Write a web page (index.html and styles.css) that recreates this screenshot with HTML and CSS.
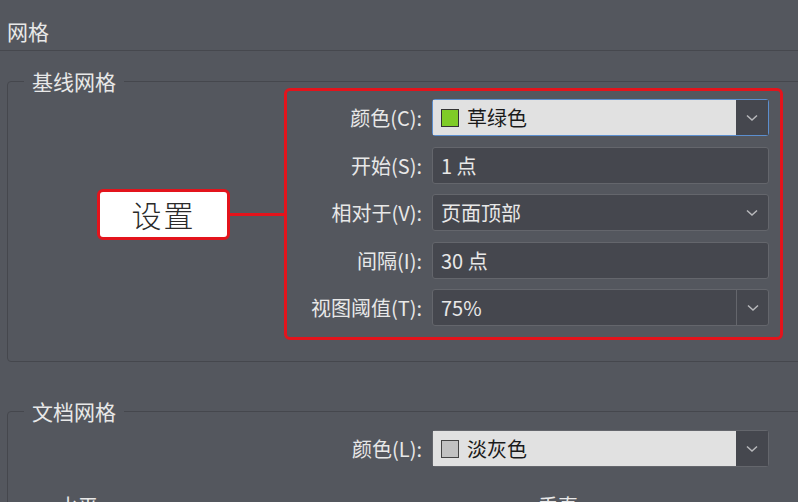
FILE: index.html
```html
<!DOCTYPE html>
<html lang="zh">
  <head>
    <meta charset="UTF-8" />
    <title>网格</title>
    <link rel="stylesheet" href="styles.css">
  </head>
  <body>
    <div class="page-title">网格</div>

    <fieldset class="group">
      <legend>基线网格</legend>
      <div class="callout-row">
        <div class="callout">设置</div>
        <div class="connector"></div>
        <div class="highlight">
          <div class="row">
            <label>颜色(C):</label>
            <div class="select light focus">
              <span class="value"><span class="swatch green"></span>草绿色</span>
              <span class="drop"><svg width="12" height="8" viewBox="0 0 12 8"><path d="M1 1.5 L6 6 L11 1.5" /></svg></span>
            </div>
          </div>
          <div class="row">
            <label>开始(S):</label>
            <div class="field">1 点</div>
          </div>
          <div class="row">
            <label>相对于(V):</label>
            <div class="select flat">
              <span class="value">页面顶部</span>
              <span class="drop"><svg width="12" height="8" viewBox="0 0 12 8"><path d="M1 1.5 L6 6 L11 1.5" /></svg></span>
            </div>
          </div>
          <div class="row">
            <label>间隔(I):</label>
            <div class="field">30 点</div>
          </div>
          <div class="row">
            <label>视图阈值(T):</label>
            <div class="select dark">
              <span class="value">75%</span>
              <span class="drop"><svg width="12" height="8" viewBox="0 0 12 8"><path d="M1 1.5 L6 6 L11 1.5" /></svg></span>
            </div>
          </div>
        </div>
      </div>
    </fieldset>

    <fieldset class="group second">
      <legend>文档网格</legend>
      <div class="row doc-row">
        <label>颜色(L):</label>
        <div class="select light">
          <span class="value"><span class="swatch grey"></span>淡灰色</span>
          <span class="drop"><svg width="12" height="8" viewBox="0 0 12 8"><path d="M1 1.5 L6 6 L11 1.5" /></svg></span>
        </div>
      </div>
      <div class="sub-heads">
        <span class="h-left">水平</span>
        <span class="h-right">垂直</span>
      </div>
    </fieldset>
  </body>
</html>
```

FILE: styles.css
```css
body {
  margin: 0;
  height: 502px;
  background: #54575e;
  color: #e8e8e8;
  font-family: "Noto Sans CJK SC", "Noto Sans", sans-serif;
  font-size: 20px;
  overflow: hidden;
}
.page-title {
  height: 51px;
  box-sizing: border-box;
  padding-left: 7px;
  line-height: 62px;
  font-size: 21px;
  border-bottom: 1px solid #46484e;
}
.group {
  margin: 20px -30px 0 7px;
  padding: 0 0 21px 0;
  border: 1px solid #45474d;
  border-radius: 4px;
  min-width: 0;
}
.group legend {
  margin-left: 16px;
  padding: 0 8px;
  line-height: 20px;
  font-size: 21px;
}
.callout-row {
  display: flex;
  align-items: center;
  margin-top: -3px;
}
.callout {
  margin-left: 89px;
  width: 127px;
  height: 45px;
  background: #fff;
  border: 3px solid #e3141c;
  border-radius: 6px;
  color: #2a2a2a;
  font-size: 30px;
  font-weight: 300;
  display: flex;
  align-items: center;
  justify-content: center;
  letter-spacing: 2px;
}
.connector {
  width: 54px;
  height: 3px;
  background: #e3141c;
}
.highlight {
  width: 499px;
  box-sizing: border-box;
  border: 3px solid #e3141c;
  border-radius: 6px;
  padding: 8px 11px 11px 0;
  display: flex;
  flex-direction: column;
  gap: 10.5px;
}
.row {
  display: flex;
  align-items: center;
  height: 37px;
}
.row label {
  width: 145px;
  box-sizing: border-box;
  padding-right: 10px;
  text-align: right;
  flex-shrink: 0;
  white-space: nowrap;
}
.field,
.select {
  width: 337px;
  height: 37px;
  box-sizing: border-box;
  border: 1px solid #64666c;
  border-radius: 3px;
  background: #45474e;
  display: flex;
  align-items: center;
}
.field {
  padding-left: 8px;
}
.select .value {
  flex: 1;
  display: flex;
  align-items: center;
  padding-left: 8px;
  height: 100%;
}
.select .drop {
  width: 32px;
  height: 100%;
  display: flex;
  align-items: center;
  justify-content: center;
  box-sizing: border-box;
}
.select svg path {
  fill: none;
  stroke: #b8b9bc;
  stroke-width: 1.5;
}
.select.light .value {
  background: #e1e1e1;
  color: #1a1a1a;
}
.select.light .drop {
  background: #45474e;
}
.select.focus {
  border-color: #5c8fcf;
}
.select.dark .drop {
  border-left: 1px solid #64666c;
}
.swatch {
  width: 16px;
  height: 16px;
  border: 1px solid #333;
  margin-right: 8px;
}
.swatch.green {
  background: #7fcc26;
}
.swatch.grey {
  background: #c2c2c2;
  border-color: #444;
}
.group.second {
  margin-top: 39px;
}
.doc-row {
  margin-top: 9px;
  padding-left: 279px;
}
.sub-heads {
  display: flex;
  margin-top: 24px;
  padding-left: 50px;
  gap: 440px;
}
```
